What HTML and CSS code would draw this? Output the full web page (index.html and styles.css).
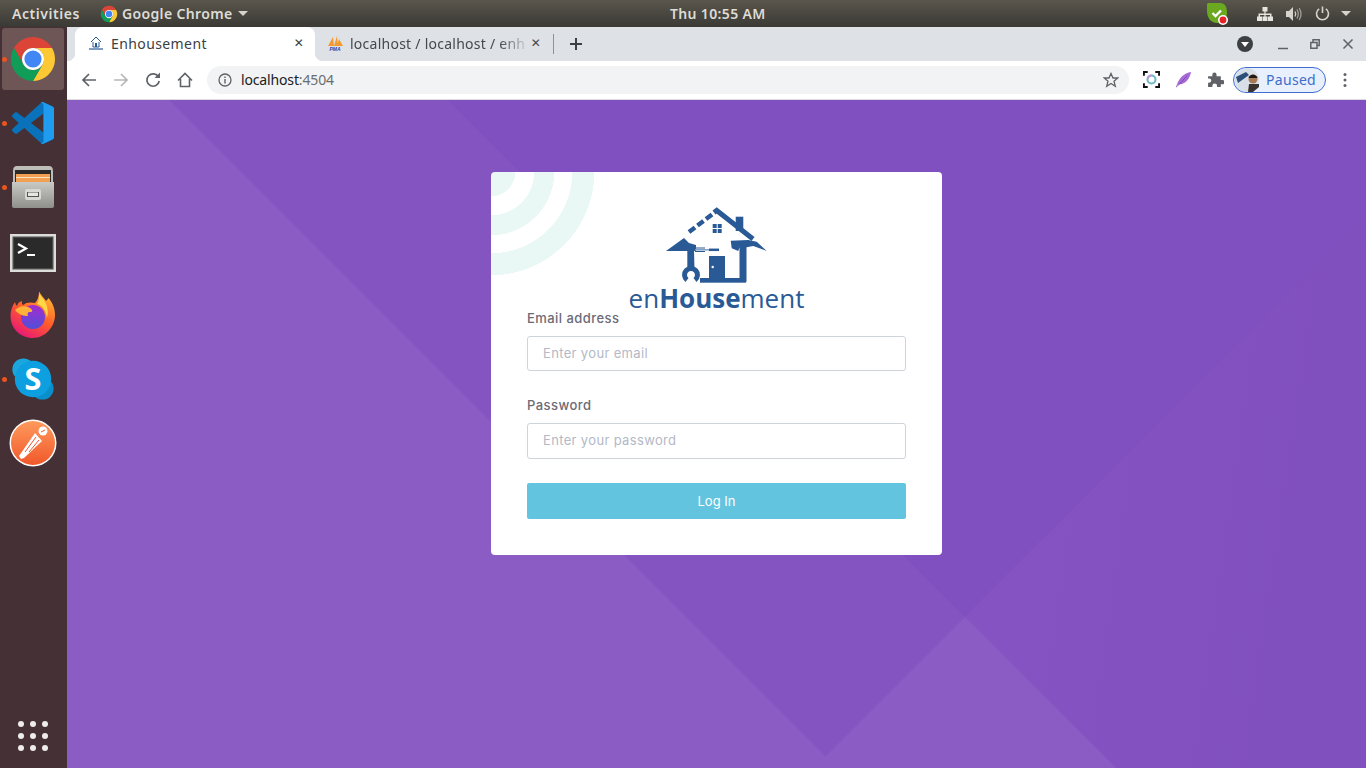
FILE: index.html
```html
<!DOCTYPE html>
<html lang="en">
<head>
    <meta charset="UTF-8">
    <meta name="viewport" content="width=device-width, initial-scale=1.0">
    <title>Enhousement</title>
    <link rel="stylesheet" href="styles.css">
</head>
<body>
    <svg class="defs" width="0" height="0">
        <symbol id="chrome" viewBox="0 0 48 48">
            <path fill="#db4437" d="M4.95 13A22 22 0 0 1 43.05 13H24A11 11 0 0 0 14.47 29.5Z"/>
            <path fill="#fcc934" d="M43.05 13A22 22 0 0 1 24 46L33.53 29.5A11 11 0 0 0 24 13Z"/>
            <path fill="#0f9d58" d="M24 46A22 22 0 0 1 4.95 13L14.47 29.5A11 11 0 0 0 33.53 29.5Z"/>
            <circle cx="24" cy="24" r="11" fill="#fff"/>
            <circle cx="24" cy="24" r="8.6" fill="#4285f4"/>
        </symbol>
    </svg>

    <div class="topbar">
        <div class="top-left">
            <span class="activities">Activities</span>
            <svg class="top-chrome"><use href="#chrome"/></svg>
            <span>Google Chrome</span>
            <span class="caret"></span>
        </div>
        <div class="clock">Thu 10:55 AM</div>
        <div class="top-right">
            <svg class="shield" viewBox="0 0 24 24">
                <path fill="#6aa820" d="M3 1H15C20 1 22 5 22 11C22 17 18 21 12 21C6 21 2 16 2 9V2Z"/>
                <path fill="none" stroke="#fff" stroke-width="2.4" d="M7.5 11L10.5 14L16 8.5"/>
                <circle cx="18" cy="18" r="5" fill="#fff"/>
                <circle cx="18" cy="18" r="3.4" fill="#e8202a"/>
            </svg>
            <svg class="net" viewBox="0 0 16 16">
                <path fill="#e6e4de" d="M5.5 1H10.5V5.5H8.6V7.4H14.5V10.5H16V15H11V10.5H13V8.9H8.6V10.5H10.5V15H5.5V10.5H7.4V8.9H3V10.5H5V15H0V10.5H1.5V7.4H7.4V5.5H5.5Z"/>
            </svg>
            <svg class="vol" viewBox="0 0 16 16">
                <path fill="#d5d3cc" d="M0 5H3L7 1V15L3 11H0Z"/>
                <path fill="none" stroke="#d5d3cc" stroke-width="1.3" d="M9 5.5Q10.5 8 9 10.5"/>
                <path fill="none" stroke="#a09e98" stroke-width="1.3" d="M11 3.5Q13.6 8 11 12.5M13.2 2Q16.8 8 13.2 14"/>
            </svg>
            <svg class="power" viewBox="0 0 16 16">
                <path fill="none" stroke="#d5d3cc" stroke-width="1.7" d="M4.4 3A6.4 6.4 0 1 0 11.6 3M8 .5V7.5"/>
            </svg>
            <span class="caret"></span>
        </div>
    </div>

    <div class="desktop">
        <nav class="dock">
            <div class="dock-item active">
                <span class="run-dot"></span>
                <svg class="dock-icon"><use href="#chrome"/></svg>
            </div>
            <div class="dock-item">
                <span class="run-dot"></span>
                <svg class="dock-icon vscode" viewBox="0 0 100 100">
                    <path fill="#0a72bb" fill-rule="evenodd" d="M70.9 99.3C72.5 99.9 74.3 99.9 75.9 99.1L96.5 89.2C98.6 88.2 100 86 100 83.6V16.4C100 14 98.6 11.8 96.5 10.8L75.9 .9C73.8-.1 71.3 .1 69.5 1.4C69.3 1.6 69 1.8 68.8 2.1L29.4 38L12.2 25C10.6 23.8 8.4 23.9 6.9 25.2L1.4 30.3C-.5 31.9-.5 34.8 1.4 36.4L16.2 50L1.4 63.6C-.5 65.2-.5 68.1 1.4 69.7L6.9 74.8C8.4 76.1 10.6 76.2 12.2 75L29.4 62L68.8 97.9C69.4 98.5 70.1 99 70.9 99.3ZM75 27.3L45.1 50L75 72.7Z"/>
                    <path fill="#1f9cf0" d="M70.9 99.3C72.5 99.9 74.3 99.9 75.9 99.1L96.5 89.2C98.6 88.2 100 86 100 83.6V16.4C100 14 98.6 11.8 96.5 10.8L75.9 .9C73.8-.1 71.3 .1 69.5 1.4L75 5V95L69.5 98.3Z"/>
                </svg>
            </div>
            <div class="dock-item">
                <span class="run-dot"></span>
                <svg class="dock-icon" viewBox="0 0 48 48">
                    <defs>
                        <linearGradient id="cabinet" x1="0" y1="0" x2="0" y2="1">
                            <stop offset="0" stop-color="#c9c9c6"/>
                            <stop offset="1" stop-color="#8f8f8c"/>
                        </linearGradient>
                    </defs>
                    <path fill="#bdbdba" d="M4 8Q4 3 8 3H40Q44 3 44 8V22H4Z"/>
                    <rect x="6" y="7" width="36" height="14" fill="#2c2a29"/>
                    <rect x="7" y="11" width="34" height="8" fill="#f0a050"/>
                    <rect x="7" y="14" width="34" height="1" fill="#fbe3c0"/>
                    <path fill="url(#cabinet)" d="M3 19H45V43Q45 45 43 45H5Q3 45 3 43Z"/>
                    <rect x="16" y="26" width="16" height="11" rx="2" fill="#d8d8d5"/>
                    <rect x="18" y="29" width="12" height="5" fill="#55534f"/>
                    <rect x="19" y="29.5" width="10" height="3.5" fill="#e6e6e3"/>
                </svg>
            </div>
            <div class="dock-item">
                <svg class="dock-icon" viewBox="0 0 48 48">
                    <rect x="1" y="7" width="46" height="38" fill="#dcdcda"/>
                    <rect x="3.5" y="9.5" width="41" height="33" fill="#4a4a48"/>
                    <rect x="5" y="11" width="38" height="30" fill="#2a2a2a"/>
                    <path fill="none" stroke="#fff" stroke-width="2.2" d="M9 17L17 21.500L9 26"/>
                    <path stroke="#fff" stroke-width="2" d="M18 28H26"/>
                </svg>
            </div>
            <div class="dock-item">
                <svg class="dock-icon" viewBox="0 0 48 48">
                    <defs>
                        <linearGradient id="fox" x1="0.8" y1="0" x2="0.2" y2="1">
                            <stop offset="0" stop-color="#ffbd2e"/>
                            <stop offset="0.5" stop-color="#ff5a2c"/>
                            <stop offset="1" stop-color="#e5127d"/>
                        </linearGradient>
                        <linearGradient id="globe" x1="0.5" y1="0" x2="0.5" y2="1">
                            <stop offset="0" stop-color="#a72bd0"/>
                            <stop offset="1" stop-color="#4f4fd8"/>
                        </linearGradient>
                    </defs>
                    <path fill="url(#fox)" d="M30 .5C32 4 35 7 37 10C38 9 39 8 39.5 7C44 12 46 18 46 24C46 36 36 47 24 47C11 47 1.500 37 1.500 25C1.500 20 3 15 6 11C6.500 13 7 14 8 15C9 12 10 11 13 10C12.500 12 13 13 14 14C17 11 22 11 26 12C29 9 30 5 30 .5Z"/>
                    <circle cx="24" cy="26" r="12" fill="url(#globe)"/>
                    <path fill="#ffb23a" d="M6 19C10 15 16 14 21 17C24 19 24 21 21 21C19 21 18 22 19 25C15 25 10 24 6 19Z"/>
                    <path fill="#ffd54a" d="M30 3C35 9 41 15 38 27C37 20 34 15 28 13C30 10 30 7 30 3Z"/>
                </svg>
            </div>
            <div class="dock-item">
                <span class="run-dot"></span>
                <svg class="dock-icon skype" viewBox="0 0 48 48">
                    <circle cx="14" cy="14" r="11.500" fill="#1aa7df"/>
                    <circle cx="34" cy="34" r="11.500" fill="#0b8fcb"/>
                    <circle cx="24" cy="24" r="19" fill="#0e9fe0"/>
                    <text class="skype-s" x="24" y="35.500" text-anchor="middle">S</text>
                </svg>
            </div>
            <div class="dock-item">
                <svg class="dock-icon" viewBox="0 0 48 48">
                    <defs>
                        <linearGradient id="pm" x1="0.5" y1="0" x2="0.5" y2="1">
                            <stop offset="0" stop-color="#ff9a5c"/>
                            <stop offset="1" stop-color="#f0582a"/>
                        </linearGradient>
                    </defs>
                    <circle cx="24" cy="24" r="23.500" fill="#fff"/>
                    <circle cx="24" cy="24" r="22" fill="url(#pm)"/>
                    <path fill="#fff" d="M10 37L12 40L15 39L33 22L26 14Z"/>
                    <circle cx="34" cy="12" r="4.500" fill="#fff"/>
                    <path stroke="#f0582a" stroke-width="1" d="M16 33L27 18M20 33L30 21M32 13L36 11"/>
                </svg>
            </div>
            <div class="app-grid">
                <i></i><i></i><i></i>
                <i></i><i></i><i></i>
                <i></i><i></i><i></i>
            </div>
        </nav>

        <div class="browser">
            <div class="tabstrip">
                <div class="tab active">
                    <svg class="favicon" viewBox="0 0 16 16">
                        <path fill="none" stroke="#2a5a96" stroke-width="1" d="M3 7L8 2L13 7M5 7V12H11V7"/>
                        <rect x="7" y="8" width="2" height="4" fill="#2a5a96"/>
                        <rect x="1" y="13" width="14" height="2" fill="#7f9cc2"/>
                    </svg>
                    <span class="tab-title">Enhousement</span>
                    <span class="tab-close">&#10005;</span>
                </div>
                <div class="tab">
                    <svg class="favicon" viewBox="0 0 16 16">
                        <path fill="#f29a2e" d="M1 11L6 2L7 11ZM7 11L10 1L11 11ZM10 11L12 4L16 11Z"/>
                        <text class="pma" x="8" y="15.500" text-anchor="middle">PMA</text>
                    </svg>
                    <span class="tab-title fade">localhost / localhost / enh</span>
                    <span class="tab-close">&#10005;</span>
                </div>
                <span class="tab-sep"></span>
                <svg class="new-tab" viewBox="0 0 14 14">
                    <path stroke="#3c4043" stroke-width="2" d="M7 1V13M1 7H13"/>
                </svg>
                <div class="win-controls">
                    <svg class="win-menu" viewBox="0 0 16 16">
                        <circle cx="8" cy="8" r="8" fill="#3c4043"/>
                        <path fill="#fff" d="M4 6H12L8 11Z"/>
                    </svg>
                    <svg class="win-btn" viewBox="0 0 12 12">
                        <path stroke="#5f6368" stroke-width="1.500" d="M1 10.500H11"/>
                    </svg>
                    <svg class="win-btn" viewBox="0 0 12 12">
                        <path fill="none" stroke="#5f6368" stroke-width="1.500" d="M1.800 4.500H8V10.200H1.800ZM4 4V1.800H10.200V7.500H8"/>
                    </svg>
                    <svg class="win-btn" viewBox="0 0 12 12">
                        <path stroke="#5f6368" stroke-width="1.500" d="M1.500 1.500L10.500 10.500M10.500 1.500L1.500 10.500"/>
                    </svg>
                </div>
            </div>

            <div class="toolbar">
                <button class="tool-btn">
                    <svg viewBox="0 0 16 16"><path fill="none" stroke="#5f6368" stroke-width="1.700" d="M15 8H2M8 2L2 8L8 14"/></svg>
                </button>
                <button class="tool-btn">
                    <svg viewBox="0 0 16 16"><path fill="none" stroke="#b4b6b9" stroke-width="1.700" d="M1 8H14M8 2L14 8L8 14"/></svg>
                </button>
                <button class="tool-btn">
                    <svg viewBox="0 0 16 16"><path fill="none" stroke="#5f6368" stroke-width="1.700" d="M13.500 5A6.200 6.200 0 1 0 14.200 9"/><path fill="#5f6368" d="M9.500 6H15V.5Z"/></svg>
                </button>
                <button class="tool-btn">
                    <svg viewBox="0 0 16 16"><path fill="none" stroke="#5f6368" stroke-width="1.600" d="M1 8.500L8 1.500L15 8.500M3.500 7V14.500H12.500V7"/></svg>
                </button>
                <div class="omnibox">
                    <svg class="info" viewBox="0 0 14 14">
                        <circle cx="7" cy="7" r="6" fill="none" stroke="#5f6368" stroke-width="1.300"/>
                        <path stroke="#5f6368" stroke-width="1.400" d="M7 6V10.500M7 3.500V5"/>
                    </svg>
                    <span class="url">localhost<span class="url-port">:4504</span></span>
                    <svg class="star" viewBox="0 0 16 16">
                        <path fill="none" stroke="#5f6368" stroke-width="1.300" d="M8 1.500L10 6H14.800L11 9.200L12.300 14.300L8 11.500L3.700 14.300L5 9.200L1.200 6H6Z"/>
                    </svg>
                </div>
                <button class="tool-btn ext">
                    <svg viewBox="0 0 18 18">
                        <path fill="none" stroke="#111" stroke-width="2" d="M1 5V1H5M13 1H17V5M17 13V17H13M5 17H1V13"/>
                        <circle cx="9" cy="9" r="4.200" fill="none" stroke="#6fb8c9" stroke-width="2.200"/>
                        <path fill="none" stroke="#c29ad9" stroke-width="2.200" d="M5 8A4.200 4.200 0 0 1 9 4.800"/>
                    </svg>
                </button>
                <button class="tool-btn ext">
                    <svg viewBox="0 0 18 18">
                        <path fill="#a66bd4" d="M1 17L3 12C5 7 10 2 17 1C16 7 12 13 6 14L3 14.500L1.500 17.500Z"/>
                        <path stroke="#6f3fa8" stroke-width=".8" d="M2 16.500L13 5"/>
                    </svg>
                </button>
                <button class="tool-btn ext">
                    <svg viewBox="0 0 16 16">
                        <path fill="#5f6368" d="M1 5H5V3.500A2 2 0 0 1 9 3.500V5H13V8.500H14.500A2 2 0 0 1 14.500 12.500H13V15H9.500V14A2 2 0 0 0 5 14V15H1V11H2A2 2 0 0 0 2 7H1Z"/>
                    </svg>
                </button>
                <div class="profile-chip">
                    <svg class="avatar" viewBox="0 0 24 24">
                        <circle cx="12" cy="12" r="12" fill="#d8dfe6"/>
                        <path fill="#2d4f7a" d="M1 9L11 4L14 7L3 15Z"/>
                        <path fill="#3a3430" d="M14 16H24V19L18 24H13Z"/>
                        <circle cx="18" cy="11" r="4.500" fill="#a57a55"/>
                        <path fill="#1d1a18" d="M13.500 9Q18 4 22.500 9L22 10H14Z"/>
                    </svg>
                    <span>Paused</span>
                </div>
                <svg class="more" viewBox="0 0 4 16">
                    <circle cx="2" cy="2.500" r="1.500" fill="#5f6368"/>
                    <circle cx="2" cy="8" r="1.500" fill="#5f6368"/>
                    <circle cx="2" cy="13.500" r="1.500" fill="#5f6368"/>
                </svg>
            </div>

            <main class="page">
                <svg class="page-bg" viewBox="0 0 1299 668" preserveAspectRatio="none">
                    <defs>
                        <linearGradient id="rightpart" x1="0" y1="0" x2="1" y2="0.200">
                            <stop offset="0" stop-color="#8755c3"/>
                            <stop offset="1" stop-color="#8050be"/>
                        </linearGradient>
                    </defs>
                    <polygon fill="#804fc0" points="381,0 1299,0 1299,116 898,517"/>
                    <polygon fill="url(#rightpart)" points="898,517 1299,116 1299,668 1049,668"/>
                    <polygon fill="#8a5cc4" points="0,0 102,0 770,668 0,668"/>
                    <polygon fill="#8a5cc4" points="898,517 1049,668 747,668"/>
                </svg>
                <div class="login-card">
                    <div class="logo">
                        <svg class="logo-house" viewBox="0 0 104 80">
                            <g fill="#2a5a96">
                                <path d="M70.700 14V9.700H78.300V24H70.700Z"/>
                                <path d="M1 44L19 31L24 36L31 38V44Z"/>
                                <path d="M22.300 44H29L29.500 62H22.300Z"/>
                                <rect x="47.700" y="17" width="4" height="4"/>
                                <rect x="52.700" y="17" width="4" height="4"/>
                                <rect x="47.700" y="22" width="4" height="4"/>
                                <rect x="52.700" y="22" width="4" height="4"/>
                                <rect x="44" y="49" width="16" height="26"/>
                                <rect x="35" y="71" width="46" height="4.700"/>
                                <path d="M65.700 33.700L83.300 33L91.700 34.700L101.700 44L88.300 39L81.500 40.300V74.700H74.500V40.300L73.300 44L66.700 41.300Z"/>
                            </g>
                            <g fill="none" stroke="#2a5a96">
                                <path stroke-width="5" d="M49 5.500L51.700 3.500L88 32"/>
                                <path stroke-width="4.500" d="M47 7.500L41 12M38.500 14L32.500 18.500M30 20.500L24 25"/>
                                <path stroke-width="5" d="M22 73A6.500 6.500 0 1 1 30 73"/>
                                <path stroke-width="1" d="M30 41H40M30 44.500H40"/>
                                <path stroke-width="2.500" d="M44 42.800H54"/>
                            </g>
                            <circle cx="47.700" cy="60" r="1.200" fill="#fff"/>
                            <path stroke="#7f9cc2" stroke-width="1.500" d="M30 42.800H44"/>
                        </svg>
                        <div class="logo-text">en<b>House</b>ment</div>
                    </div>
                    <form class="login-form">
                        <div class="form-group">
                            <label class="form-label" for="email">Email address</label>
                            <input class="form-input" id="email" type="text" placeholder="Enter your email">
                        </div>
                        <div class="form-group">
                            <label class="form-label" for="password">Password</label>
                            <input class="form-input tall" id="password" type="password" placeholder="Enter your password">
                        </div>
                        <button class="login-btn" type="button">Log In</button>
                    </form>
                </div>
            </main>
        </div>
    </div>
</body>
</html>
```

FILE: styles.css
```css
* {
    box-sizing: border-box;
}
html, body {
    height: 100%;
}
body {
    margin: 0;
    overflow: hidden;
    display: flex;
    flex-direction: column;
    font-family: "Noto Sans", sans-serif;
    background-color: #453035;
}
.defs {
    position: absolute;
}

/* ubuntu top bar */
.topbar {
    height: 27px;
    flex-shrink: 0;
    display: grid;
    grid-template-columns: 670px auto 1fr;
    align-items: center;
    background: linear-gradient(#5a564d, #3a3934);
    color: #dedcd6;
    font-size: 14px;
    font-weight: 600;
    letter-spacing: .35px;
}
.top-left {
    display: flex;
    align-items: center;
    padding-left: 12px;
}
.activities {
    width: 88px;
    letter-spacing: .55px;
}
.top-chrome {
    width: 18px;
    height: 18px;
    margin-right: 4px;
}
.caret {
    width: 0;
    height: 0;
    margin-left: 6px;
    border-left: 5px solid transparent;
    border-right: 5px solid transparent;
    border-top: 5px solid #d5d3cc;
}
.top-right {
    display: flex;
    align-items: center;
    justify-content: flex-end;
    padding-right: 15px;
}
.shield {
    width: 24px;
    height: 24px;
    margin-right: 28px;
}
.net {
    width: 16px;
    height: 16px;
    margin-right: 13px;
}
.vol {
    width: 16px;
    height: 16px;
    margin-right: 13px;
}
.power {
    width: 15px;
    height: 15px;
    margin-right: 5px;
}

.desktop {
    flex: 1;
    display: flex;
    min-height: 0;
}

/* launcher */
.dock {
    width: 67px;
    flex-shrink: 0;
    display: flex;
    flex-direction: column;
    align-items: flex-start;
    gap: 2px;
    padding: 1px 0 17px 2px;
    background-color: #453035;
}
.dock-item {
    position: relative;
    width: 62px;
    height: 62px;
    display: flex;
    align-items: center;
    justify-content: center;
    border-radius: 3px;
}
.dock-item.active {
    background-color: #6e5556;
}
.dock-icon {
    width: 48px;
    height: 48px;
}
.dock-icon.vscode {
    width: 42px;
    height: 42px;
}
.dock-icon.skype {
    width: 46px;
    height: 46px;
}
.skype-s {
    font-family: "Open Sans", sans-serif;
    font-weight: 700;
    font-size: 32px;
    fill: #fff;
}
.run-dot {
    position: absolute;
    left: 0;
    top: 29px;
    width: 5px;
    height: 5px;
    border-radius: 50%;
    background-color: #e95420;
}
.app-grid {
    margin: auto 0 0 16px;
    display: grid;
    grid-template-columns: repeat(3, 6px);
    gap: 6px;
}
.app-grid i {
    width: 6px;
    height: 6px;
    border-radius: 50%;
    background-color: #efecec;
}

/* chrome window */
.browser {
    flex: 1;
    min-width: 0;
    display: flex;
    flex-direction: column;
}
.tabstrip {
    height: 34px;
    flex-shrink: 0;
    display: flex;
    align-items: center;
    padding-left: 8px;
    background-color: #dee1e6;
}
.tab {
    position: relative;
    width: 238px;
    height: 34px;
    display: flex;
    align-items: center;
    padding: 0 10px 2px 12px;
    color: #45484c;
    font-size: 14px;
    letter-spacing: .25px;
}
.tab.active {
    width: 240px;
    padding: 0 9px 2px 13px;
    background-color: #fff;
    border-radius: 8px 8px 0 0;
    color: #3c4043;
    letter-spacing: .4px;
}
.tab.active::before,
.tab.active::after {
    content: "";
    position: absolute;
    bottom: 0;
    width: 8px;
    height: 8px;
}
.tab.active::before {
    left: -8px;
    background: radial-gradient(circle at 0 0, #dee1e6 8px, #fff 8.5px);
}
.tab.active::after {
    right: -8px;
    background: radial-gradient(circle at 100% 0, #dee1e6 8px, #fff 8.5px);
}
.favicon {
    width: 16px;
    height: 16px;
    flex-shrink: 0;
}
.pma {
    font-family: "Liberation Sans", sans-serif;
    font-size: 5px;
    font-weight: 700;
    font-style: italic;
    fill: #3a3f9e;
    letter-spacing: 0;
}
.tab-title {
    flex: 1;
    min-width: 0;
    margin-left: 7px;
    white-space: nowrap;
}
.tab-title.fade {
    -webkit-mask-image: linear-gradient(90deg, #000 86%, rgba(0, 0, 0, .2));
    mask-image: linear-gradient(90deg, #000 86%, rgba(0, 0, 0, .2));
}
.tab-close {
    width: 14px;
    margin-left: 5px;
    text-align: center;
    font-size: 12px;
    font-family: "DejaVu Sans", sans-serif;
}
.tab-sep {
    width: 1px;
    height: 20px;
    background-color: #8e9297;
}
.new-tab {
    width: 14px;
    height: 14px;
    margin-left: 15px;
}
.win-controls {
    margin-left: auto;
    display: flex;
    align-items: center;
    padding-right: 12px;
}
.win-menu {
    width: 16px;
    height: 16px;
    margin-right: 24px;
}
.win-btn {
    width: 12px;
    height: 12px;
    margin-left: 20px;
}
.win-menu + .win-btn {
    margin-left: 0;
}
.win-btn:last-child {
    margin-left: 21px;
}

.toolbar {
    height: 39px;
    flex-shrink: 0;
    display: flex;
    align-items: center;
    padding: 0 19px 1px 6px;
    background-color: #fff;
    border-bottom: 1px solid #dadce0;
}
.tool-btn {
    width: 32px;
    height: 28px;
    flex-shrink: 0;
    display: flex;
    align-items: center;
    justify-content: center;
    padding: 0;
    background: none;
    border: none;
}
.tool-btn svg {
    width: 16px;
    height: 16px;
}
.tool-btn.ext svg {
    width: 17px;
    height: 17px;
}
.omnibox {
    flex: 1;
    min-width: 0;
    height: 28px;
    display: flex;
    align-items: center;
    margin: 0 6px;
    padding: 0 10px 0 11px;
    border-radius: 14px;
    background-color: #f1f3f4;
}
.info {
    width: 14px;
    height: 14px;
}
.url {
    flex: 1;
    margin-left: 9px;
    color: #202124;
    font-size: 14px;
    letter-spacing: -.15px;
}
.url-port {
    color: #6b6e72;
}
.star {
    width: 16px;
    height: 16px;
}
.profile-chip {
    width: 93px;
    height: 26px;
    flex-shrink: 0;
    display: flex;
    align-items: center;
    gap: 7px;
    margin-left: 2px;
    padding-left: 1px;
    border: 1px solid #3f6fd0;
    border-radius: 13px;
    background-color: #e8f0fe;
    color: #3d6ec9;
    font-size: 14px;
    letter-spacing: .3px;
}
.avatar {
    width: 24px;
    height: 24px;
}
.more {
    width: 4px;
    height: 16px;
    margin-left: 17px;
    flex-shrink: 0;
}

/* login page */
.page {
    position: relative;
    flex: 1;
    min-height: 0;
    display: flex;
    justify-content: center;
    align-items: flex-start;
    padding-top: 72px;
    background-color: #8454c1;
}
.page-bg {
    position: absolute;
    left: 0;
    top: 0;
    width: 100%;
    height: 100%;
}
.login-card {
    position: relative;
    width: 451px;
    padding: 36px;
    border-radius: 4px;
    background-color: #fff;
    background-image: radial-gradient(circle at 0 0,
        #e9f7f5 24px, #fff 24.5px, #fff 43px, #e9f7f5 43.5px,
        #e9f7f5 63px, #fff 63.5px, #fff 81px, #e9f7f5 81.5px,
        #e9f7f5 103px, #fff 103.5px);
}
.logo {
    height: 100px;
    display: flex;
    flex-direction: column;
    align-items: center;
}
.logo-house {
    width: 104px;
    height: 80px;
    flex-shrink: 0;
    margin-top: -1px;
    filter: blur(.3px);
}
.logo-text {
    margin-top: -1px;
    color: #2a5a96;
    font-family: "Open Sans", sans-serif;
    font-size: 26px;
    font-weight: 500;
    line-height: 24px;
    white-space: nowrap;
}
.logo-text b {
    font-weight: 700;
}
.form-group {
    margin-bottom: 24px;
}
.form-label {
    display: block;
    margin-bottom: 8px;
    color: #6c6a75;
    font-family: "Inter", sans-serif;
    font-size: 13px;
    font-weight: 500;
    line-height: 20px;
    letter-spacing: .45px;
}
.form-input {
    display: block;
    width: 100%;
    height: 35px;
    padding: 0 15px 2px;
    border: 1px solid #ced4da;
    border-radius: 3px;
    font-family: "Inter", sans-serif;
    font-size: 13px;
    letter-spacing: .35px;
    background-color: #fff;
}
.form-input.tall {
    height: 36px;
}
.form-input::placeholder {
    color: #b3b9c6;
}
.login-btn {
    display: block;
    width: 100%;
    height: 36px;
    border: none;
    border-radius: 2px;
    background-color: #62c4df;
    color: #fff;
    font-family: "Inter", sans-serif;
    font-size: 13px;
}
```
